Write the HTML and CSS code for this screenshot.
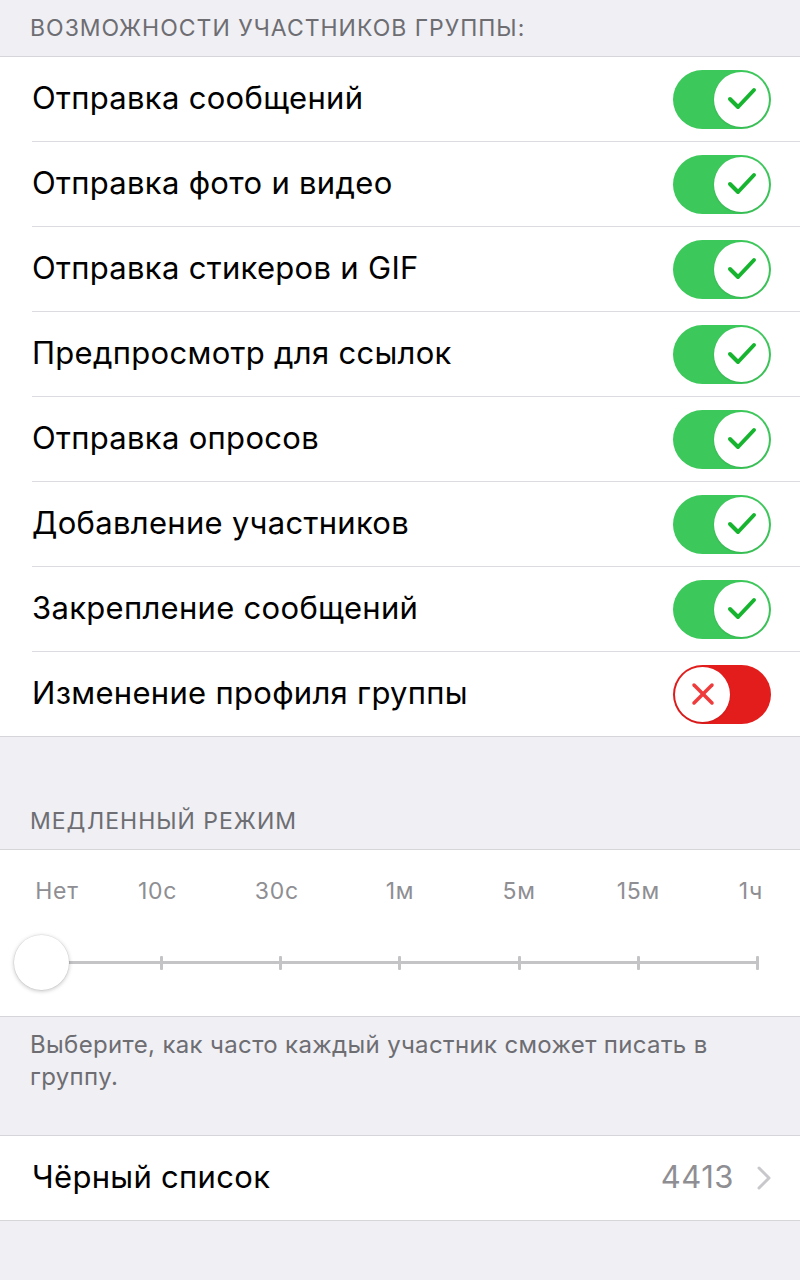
FILE: index.html
```html
<!DOCTYPE html>
<html lang="ru">

<head>
    <meta charset="UTF-8">
    <meta name="viewport" content="width=device-width, initial-scale=1.0">
    <title>Разрешения</title>
    <link rel="stylesheet" href="styles.css">
</head>

<body>
    <h2 class="section-title section-title-first">Возможности участников группы:</h2>
    <div class="list">
        <div class="row">
            <span class="row-label">Отправка сообщений</span>
            <span class="toggle on"><span class="knob"><svg viewBox="0 0 30 24" width="30" height="24"><polyline points="3,12 11,20 27,3"/></svg></span></span>
        </div>
        <div class="row">
            <span class="row-label">Отправка фото и видео</span>
            <span class="toggle on"><span class="knob"><svg viewBox="0 0 30 24" width="30" height="24"><polyline points="3,12 11,20 27,3"/></svg></span></span>
        </div>
        <div class="row">
            <span class="row-label">Отправка стикеров и GIF</span>
            <span class="toggle on"><span class="knob"><svg viewBox="0 0 30 24" width="30" height="24"><polyline points="3,12 11,20 27,3"/></svg></span></span>
        </div>
        <div class="row">
            <span class="row-label">Предпросмотр для ссылок</span>
            <span class="toggle on"><span class="knob"><svg viewBox="0 0 30 24" width="30" height="24"><polyline points="3,12 11,20 27,3"/></svg></span></span>
        </div>
        <div class="row">
            <span class="row-label">Отправка опросов</span>
            <span class="toggle on"><span class="knob"><svg viewBox="0 0 30 24" width="30" height="24"><polyline points="3,12 11,20 27,3"/></svg></span></span>
        </div>
        <div class="row">
            <span class="row-label">Добавление участников</span>
            <span class="toggle on"><span class="knob"><svg viewBox="0 0 30 24" width="30" height="24"><polyline points="3,12 11,20 27,3"/></svg></span></span>
        </div>
        <div class="row">
            <span class="row-label">Закрепление сообщений</span>
            <span class="toggle on"><span class="knob"><svg viewBox="0 0 30 24" width="30" height="24"><polyline points="3,12 11,20 27,3"/></svg></span></span>
        </div>
        <div class="row">
            <span class="row-label">Изменение профиля группы</span>
            <span class="toggle off"><span class="knob"><svg viewBox="0 0 24 24" width="24" height="24"><line x1="3" y1="3" x2="21" y2="21"/><line x1="21" y1="3" x2="3" y2="21"/></svg></span></span>
        </div>
    </div>

    <h2 class="section-title">Медленный режим</h2>
    <div class="slider-panel">
        <div class="slider-labels">
            <span class="first">Нет</span>
            <span>10с</span>
            <span>30с</span>
            <span>1м</span>
            <span>5м</span>
            <span>15м</span>
            <span class="last">1ч</span>
        </div>
        <div class="track">
            <span class="tick"></span>
            <span class="tick"></span>
            <span class="tick"></span>
            <span class="tick"></span>
            <span class="tick"></span>
            <span class="tick"></span>
            <span class="tick"></span>
            <span class="thumb"></span>
        </div>
    </div>
    <p class="section-note">Выберите, как часто каждый участник сможет писать в<br>группу.</p>

    <div class="list">
        <div class="row">
            <span class="row-label">Чёрный список</span>
            <span class="row-value">4413</span>
            <svg class="chevron" viewBox="0 0 14 24" width="14" height="24"><polyline points="2,2 12,12 2,22"/></svg>
        </div>
    </div>
</body>

</html>
```

FILE: styles.css
```css
body {
    margin: 0;
    background-color: #efeff4;
    font-family: Inter, "Noto Sans", sans-serif;
    color: #000;
}

.section-title {
    margin: 0;
    height: 112px;
    box-sizing: border-box;
    display: flex;
    align-items: flex-end;
    padding: 0 30px 14px;
    font-size: 23px;
    font-weight: 400;
    letter-spacing: 1px;
    text-transform: uppercase;
    color: #6d6d72;
}

.section-title-first {
    height: 56px;
}

.list {
    background-color: #fff;
    border-top: 1px solid #d6d6da;
    border-bottom: 1px solid #d6d6da;
    padding-left: 32px;
}

.row {
    display: flex;
    align-items: center;
    height: 84px;
    padding-right: 29px;
    border-bottom: 1px solid #dcdce0;
}

.row:last-child {
    border-bottom: none;
}

.row-label {
    flex: 1;
    font-size: 31px;
    letter-spacing: 0.3px;
    margin-top: -3px;
}

.row-value {
    font-size: 31px;
    letter-spacing: 0.5px;
    color: #8e8e93;
    margin: -3px 23px 0 0;
}

.chevron polyline {
    fill: none;
    stroke: #c7c7cc;
    stroke-width: 3;
    stroke-linecap: round;
    stroke-linejoin: round;
}

/* switches */
.toggle {
    display: flex;
    align-items: center;
    width: 98px;
    height: 59px;
    box-sizing: border-box;
    padding: 2px;
    border-radius: 30px;
}

.toggle.on {
    background-color: #3cc85a;
    justify-content: flex-end;
}

.toggle.off {
    background-color: #e31c1c;
    justify-content: flex-start;
}

.knob {
    width: 55px;
    height: 55px;
    border-radius: 50%;
    background-color: #fff;
    display: flex;
    align-items: center;
    justify-content: center;
    box-shadow: 0 1px 2px rgba(0, 0, 0, 0.1);
}

.toggle.on svg polyline {
    fill: none;
    stroke: #17b52f;
    stroke-width: 4;
    stroke-linecap: round;
    stroke-linejoin: round;
}

.toggle.off svg line {
    stroke: #ef3b3b;
    stroke-width: 3.5;
    stroke-linecap: round;
}

/* slow mode slider */
.slider-panel {
    background-color: #fff;
    border-top: 1px solid #d6d6da;
    border-bottom: 1px solid #d6d6da;
    height: 168px;
    box-sizing: border-box;
    padding-top: 28px;
}

.slider-labels {
    display: grid;
    grid-template-columns: 102px repeat(5, 1fr) 102px;
    justify-items: center;
    font-size: 23px;
    letter-spacing: 0.8px;
    line-height: 26px;
    color: #8e8e93;
}

.slider-labels span:nth-child(2),
.slider-labels span:nth-child(3) {
    padding-right: 8px;
}

.slider-labels .first {
    padding-left: 12px;
}

.slider-labels .last {
    padding-left: 4px;
}

.track {
    position: relative;
    margin: 57px 42px 0;
    height: 3px;
    background-color: #c4c4c6;
    display: flex;
    justify-content: space-between;
    align-items: center;
}

.tick {
    width: 3px;
    height: 14px;
    margin: 0 -1px;
    background-color: #c4c4c6;
    border-radius: 1px;
}

.thumb {
    position: absolute;
    left: -28px;
    top: -26px;
    width: 55px;
    height: 55px;
    border-radius: 50%;
    background-color: #fff;
    box-shadow: 0 1px 4px rgba(0, 0, 0, 0.25), 0 0 0 0.5px rgba(0, 0, 0, 0.08);
}

.section-note {
    margin: 0;
    height: 118px;
    box-sizing: border-box;
    padding: 12px 30px 0;
    font-size: 24px;
    letter-spacing: 0.35px;
    line-height: 32px;
    color: #6d6d72;
}
```
